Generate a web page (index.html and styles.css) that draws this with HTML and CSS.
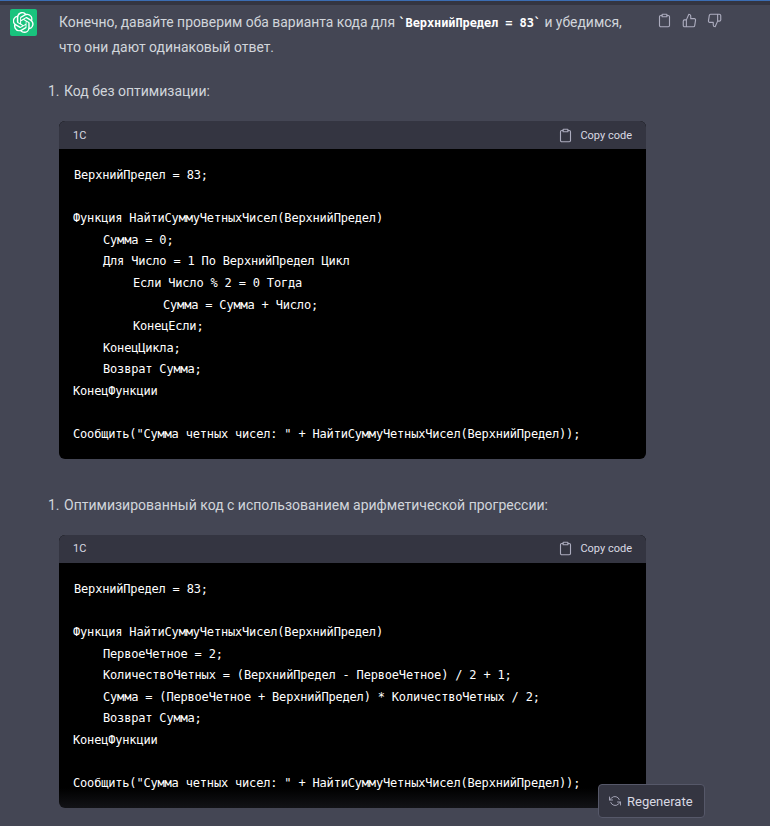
FILE: index.html
```html
<!DOCTYPE html>
<html lang="ru">
<head>
<meta charset="utf-8">
<title>Chat</title>
<link rel="stylesheet" href="styles.css">
</head>
<body>
<div class="topline"></div>
<main class="message">
  <div class="avatar">
    <svg viewBox="0 0 41 41" width="21" height="21" fill="none"><path fill="#fff" d="M37.5 16.8a10.2 10.2 0 0 0-.9-8.4 10.3 10.3 0 0 0-11.1-4.9A10.3 10.3 0 0 0 7.9 7.2a10.2 10.2 0 0 0-6.8 4.9 10.3 10.3 0 0 0 1.3 12.1 10.2 10.2 0 0 0 .9 8.4 10.3 10.3 0 0 0 11.1 4.9 10.2 10.2 0 0 0 7.7 3.4 10.3 10.3 0 0 0 9.8-7.1 10.2 10.2 0 0 0 6.8-4.9 10.3 10.3 0 0 0-1.2-12.1Zm-15.4 21.5a7.6 7.6 0 0 1-4.9-1.8l.2-.1 8.2-4.7a1.3 1.3 0 0 0 .7-1.2V19.1l3.4 2a.1.1 0 0 1 .1.1v9.5a7.7 7.7 0 0 1-7.7 7.6ZM5.7 31.3a7.6 7.6 0 0 1-.9-5.1l.2.1 8.2 4.7a1.3 1.3 0 0 0 1.3 0l10-5.8v4a.1.1 0 0 1-.1.1l-8.3 4.8a7.7 7.7 0 0 1-10.4-2.8ZM3.5 13.4a7.6 7.6 0 0 1 4-3.4v9.7a1.3 1.3 0 0 0 .7 1.2l10 5.8-3.5 2h-.1l-8.3-4.8a7.7 7.7 0 0 1-2.8-10.5Zm28.5 6.6-10-5.8 3.4-2h.1l8.3 4.8a7.7 7.7 0 0 1-1.2 13.8v-9.7a1.3 1.3 0 0 0-.6-1.1Zm3.4-5.1-.2-.1-8.2-4.8a1.3 1.3 0 0 0-1.3 0l-10 5.8v-4a.1.1 0 0 1 0-.1l8.3-4.8a7.7 7.7 0 0 1 11.4 8Zm-21.5 7.1-3.5-2a.1.1 0 0 1 0-.1v-9.5a7.7 7.7 0 0 1 12.6-5.9l-.2.1-8.2 4.7a1.3 1.3 0 0 0-.7 1.2Zm1.9-4 4.5-2.6 4.5 2.6v5.1l-4.4 2.6-4.5-2.6Z"/></svg>
  </div>
  <div class="content">
    <div class="intro-row">
      <p class="intro">Конечно, давайте проверим оба варианта кода для <strong class="inline-code">`ВерхнийПредел = 83`</strong> и убедимся, что они дают одинаковый ответ.</p>
      <div class="actions">
        <svg class="icon" viewBox="0 0 24 24"><path d="M16 4h2a2 2 0 0 1 2 2v14a2 2 0 0 1-2 2H6a2 2 0 0 1-2-2V6a2 2 0 0 1 2-2h2"/><rect x="8" y="2" width="8" height="4" rx="1"/></svg>
        <svg class="icon" viewBox="0 0 24 24"><path d="M14 9V5a3 3 0 0 0-3-3l-4 9v11h11.3a2 2 0 0 0 2-1.7l1.4-9a2 2 0 0 0-2-2.3ZM7 22H4a2 2 0 0 1-2-2v-7a2 2 0 0 1 2-2h3"/></svg>
        <svg class="icon" viewBox="0 0 24 24"><path d="M10 15v4a3 3 0 0 0 3 3l4-9V2H5.7a2 2 0 0 0-2 1.7l-1.4 9a2 2 0 0 0 2 2.3ZM17 2h2.7A2.3 2.3 0 0 1 22 4v7a2.3 2.3 0 0 1-2.3 2H17"/></svg>
      </div>
    </div>

    <div class="list-item"><span class="num">1.</span><span>Код без оптимизации:</span></div>
    <section class="code-block">
      <header class="code-head"><span>1С</span><span class="copy"><svg class="icon copy-icon" viewBox="0 0 24 24"><path d="M16 4h2a2 2 0 0 1 2 2v14a2 2 0 0 1-2 2H6a2 2 0 0 1-2-2V6a2 2 0 0 1 2-2h2"/><rect x="8" y="2" width="8" height="4" rx="1"/></svg>Copy code</span></header>
      <pre class="code"><span class="first">ВерхнийПредел = 83;</span>

Функция НайтиСуммуЧетныхЧисел(ВерхнийПредел)
	Сумма = 0;
	Для Число = 1 По ВерхнийПредел Цикл
		Если Число % 2 = 0 Тогда
			Сумма = Сумма + Число;
		КонецЕсли;
	КонецЦикла;
	Возврат Сумма;
КонецФункции

Сообщить("Сумма четных чисел: " + НайтиСуммуЧетныхЧисел(ВерхнийПредел));</pre>
    </section>

    <div class="list-item second"><span class="num">1.</span><span>Оптимизированный код с использованием арифметической прогрессии:</span></div>
    <section class="code-block">
      <header class="code-head"><span>1С</span><span class="copy"><svg class="icon copy-icon" viewBox="0 0 24 24"><path d="M16 4h2a2 2 0 0 1 2 2v14a2 2 0 0 1-2 2H6a2 2 0 0 1-2-2V6a2 2 0 0 1 2-2h2"/><rect x="8" y="2" width="8" height="4" rx="1"/></svg>Copy code</span></header>
      <pre class="code"><span class="first">ВерхнийПредел = 83;</span>

Функция НайтиСуммуЧетныхЧисел(ВерхнийПредел)
	ПервоеЧетное = 2;
	КоличествоЧетных = (ВерхнийПредел - ПервоеЧетное) / 2 + 1;
	Сумма = (ПервоеЧетное + ВерхнийПредел) * КоличествоЧетных / 2;
	Возврат Сумма;
КонецФункции

Сообщить("Сумма четных чисел: " + НайтиСуммуЧетныхЧисел(ВерхнийПредел));</pre>
    </section>
  </div>
</main>
<div class="fade"></div>
<button class="regen"><svg class="icon regen-icon" viewBox="0 0 24 24"><path d="M1 4v6h6M23 20v-6h-6"/><path d="M20.5 9A9 9 0 0 0 5.6 5.6L1 10m22 4-4.6 4.4A9 9 0 0 1 3.5 15"/></svg>Regenerate</button>
</body>
</html>
```
FILE: styles.css
```css
* { box-sizing: border-box; }
html, body { margin: 0; height: 826px; overflow: hidden; }
body { background: #444654; color: #d1d5db; font-family: Roboto, "Noto Sans", sans-serif; font-size: 14px; position: relative; }
.topline { height: 5px; background: #343541; border-top: 1px solid #3b6db3; }
.message { display: flex; padding: 4px 0 0 10px; }
.avatar { width: 27px; height: 27px; flex: none; background: #19c37d; border-radius: 2px; display: flex; align-items: center; justify-content: center; margin-right: 22px; }
.content { width: 587px; flex: none; }
.intro-row { position: relative; padding-top: 1px; }
.intro { margin: 0; line-height: 25px; width: 575px; font-size: 13.9px; }
.inline-code { font-family: "DejaVu Sans Mono", monospace; font-size: 12px; letter-spacing: -0.1px; font-weight: 700; color: #fff; line-height: 1; }
.actions { position: absolute; left: 598px; top: 4px; display: flex; gap: 10px; }
.icon { width: 15px; height: 15px; fill: none; stroke: #acacbe; stroke-width: 1.8; stroke-linecap: round; stroke-linejoin: round; display: block; }
.list-item { display: flex; margin: 19px 0 18px -11px; line-height: 24px; }
.list-item.second { margin-top: 34px; margin-bottom: 18px; }
.num { width: 16px; flex: none; }
.code-block { background: #000; border-radius: 6px; overflow: hidden; }
.code-head { height: 28px; background: #343541; color: #d9d9e3; display: flex; justify-content: space-between; align-items: center; padding: 0 14px; font-size: 11px; }
.copy { display: flex; align-items: center; gap: 7px; }
.copy-icon { width: 15px; height: 15px; }
.code { margin: 0; padding: 16px 14px 13px; font-family: "DejaVu Sans Mono", monospace; font-size: 12px; letter-spacing: -0.18px; line-height: 21.6px; color: #fff; tab-size: 30px; }
.first { margin-left: 1px; }
.fade { position: absolute; left: 0; right: 0; bottom: 0; height: 38px; background: linear-gradient(to bottom, rgba(68,70,84,0), rgba(68,70,84,.3) 60%, #444654 62%); pointer-events: none; }
.regen { position: absolute; left: 598px; top: 784px; width: 107px; height: 34px; background: #343541; border: 1px solid #565869; border-radius: 4px; color: #d9d9e3; font: 13px Roboto, sans-serif; display: flex; align-items: center; gap: 6px; padding: 0 10px; }
.regen-icon { width: 12px; height: 12px; }
```
